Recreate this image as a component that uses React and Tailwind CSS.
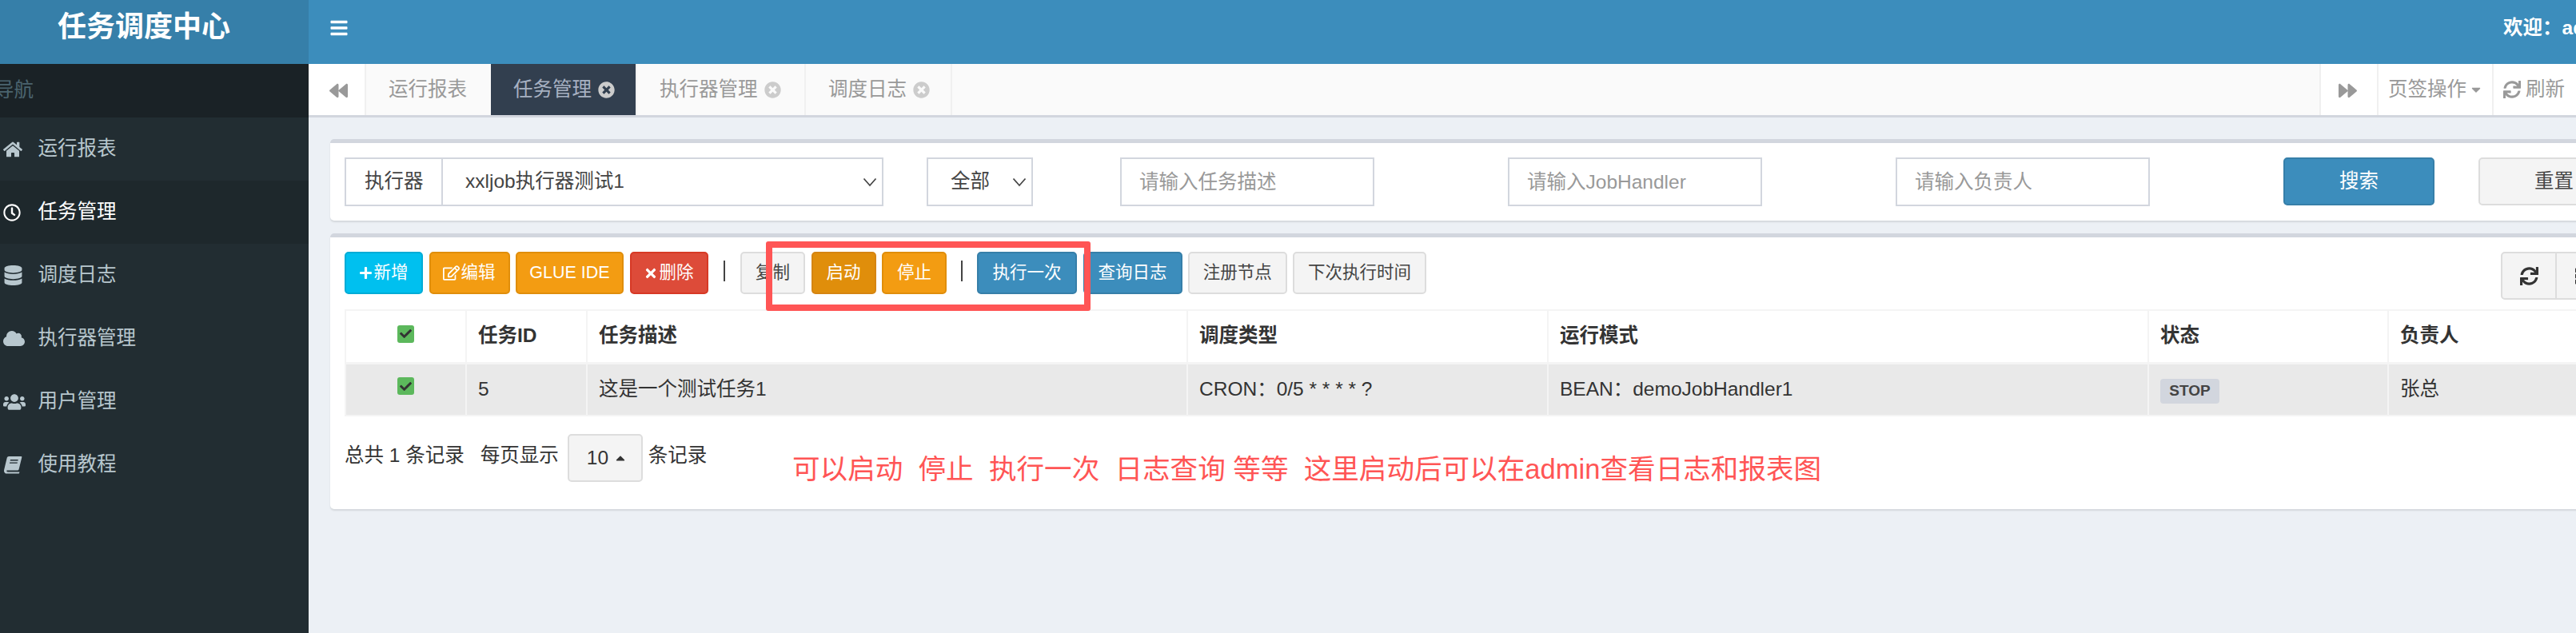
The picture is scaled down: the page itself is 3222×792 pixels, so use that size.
import React from "react";
import {
  FaBars, FaBackward, FaForward, FaHome, FaRegClock, FaDatabase, FaCloud, FaUsers,
  FaPlus, FaRegEdit, FaTimes, FaSync, FaTimesCircle, FaThList, FaCheck, FaCaretDown, FaCaretUp,
} from "react-icons/fa";

const font = "font-['Liberation_Sans','Noto_Sans_CJK_SC',sans-serif]";

// slanted book, the package's FaBook is upright
function BookIcon() {
  return (
    <svg width="24" height="23" viewBox="0 0 24 23" fill="currentColor">
      <path fillRule="evenodd" d="M7 1 H22.5 Q23.6 1 23.3 2.2 L19.6 17.2 Q19.2 18.5 18 18.5 H5 Q4 18.5 4.3 19.6 Q4.6 20.6 6 20.6 H20.5 L20 22 Q19.8 22.6 19 22.6 H4.5 Q1.4 22.6 1 19.5 Q0.9 18.6 1.2 17.4 L4.8 2.6 Q5.2 1 7 1 Z M9 5 L8.7 6.4 H18.4 L18.7 5 Z M8.2 8.4 L7.9 9.8 H17.6 L17.9 8.4 Z" />
    </svg>
  );
}

const navItems = [
  { label: "运行报表", icon: <FaHome className="text-[24px]" />, cls: "bg-[#222d32] text-[#b8c7ce]" },
  { label: "任务管理", icon: <FaRegClock className="text-[22px]" />, cls: "bg-[#1e282c] text-white" },
  { label: "调度日志", icon: <FaDatabase className="text-[25px]" />, cls: "text-[#b8c7ce]" },
  { label: "执行器管理", icon: <FaCloud className="text-[27px]" />, cls: "text-[#b8c7ce]" },
  { label: "用户管理", icon: <FaUsers className="text-[28px]" />, cls: "text-[#b8c7ce]" },
  { label: "使用教程", icon: <BookIcon />, cls: "text-[#b8c7ce]" },
];

function Chevron() {
  return (
    <svg width="18" height="12" viewBox="0 0 18 12" className="shrink-0">
      <path d="M1.5 1.5 L9 10 L16.5 1.5" fill="none" stroke="#444" strokeWidth="1.7" />
    </svg>
  );
}

function Tab({ label, cls }) {
  return (
    <div className={`flex items-center h-full pl-[28px] gap-[8px] border-r-2 border-[#f0f0f0] text-[#999] ${cls}`}>
      <span>{label}</span>
      <FaTimesCircle className="text-[21px] text-[#ccc]" />
    </div>
  );
}

function Btn({ cls, children }) {
  return (
    <button className={`h-[53px] shrink-0 flex items-center justify-center rounded-[5px] border-2 text-[21.5px] ${cls}`}>
      {children}
    </button>
  );
}

function Check() {
  return (
    <span className="mx-auto flex w-[21px] h-[22px] items-center justify-center rounded-[3px] bg-[#5cb85c]">
      <FaCheck className="text-[15px] text-[#333]" />
    </span>
  );
}

export default function App() {
  return (
    <div className={`flex w-[3222px] h-[792px] overflow-hidden bg-[#ecf0f5] text-[24.5px] text-[#333] ${font}`}>
      <aside className="w-[386px] shrink-0 bg-[#222d32] overflow-hidden">
        <div className="h-[80px] bg-[#367fa9] pl-[72px] pt-[14px] text-[36px] leading-[40px] font-bold text-white">任务调度中心</div>
        <div className="h-[67px] bg-[#1a2226] flex items-center -ml-[7px] text-[#4b646f]">导航</div>
        <nav>
          {navItems.map((item) => (
            <div key={item.label} className={`h-[79px] flex items-center pl-[4px] ${item.cls}`}>
              <span className="w-[43.5px] shrink-0">{item.icon}</span>
              <span>{item.label}</span>
            </div>
          ))}
        </nav>
      </aside>

      <main className="flex-1 min-w-0 overflow-hidden">
        <header className="h-[80px] bg-[#3c8dbc] flex items-center pl-[26px] text-white whitespace-nowrap">
          <FaBars className="text-[24px] -mt-[10px] shrink-0" />
          <span className="ml-[2695px] -mt-[10px] font-bold">欢迎：admin</span>
        </header>

        <div className="h-[67px] flex bg-[#fafafa] border-b-[3px] border-[#d2d6de] whitespace-nowrap">
          <div className="w-[72px] shrink-0 flex items-center pl-[26px] bg-white border-r-2 border-[#f0f0f0] text-[#999]"><FaBackward className="text-[23px] mt-[3px]" /></div>
          <div className="w-[156px] shrink-0 flex items-center pl-[28px] border-r-0 text-[#999]">运行报表</div>
          <Tab label="任务管理" cls="w-[183px] shrink-0 pl-[27px] bg-[#323f4f] !text-[#a7b1c2]" />
          <Tab label="执行器管理" cls="w-[211px] shrink-0" />
          <Tab label="调度日志" cls="w-[183px] shrink-0" />
          <div className="flex-1" />
          <div className="w-[72px] shrink-0 flex items-center pl-[22px] bg-white border-l-2 border-[#f0f0f0] text-[#999]"><FaForward className="text-[23px] mt-[3px]" /></div>
          <div className="w-[144px] shrink-0 flex items-center pl-[12px] bg-white border-l-2 border-[#f0f0f0] text-[#999]">页签操作<FaCaretDown className="text-[18px] ml-[3px]" /></div>
          <div className="w-[105px] shrink-0 flex items-center pl-[12px] gap-[6px] bg-white border-l-2 border-[#f0f0f0] text-[#999]"><FaSync className="text-[22px]" />刷新</div>
        </div>

        <div className="pl-[27px] pt-[27px] w-[2920px]">
          <section className="h-[102px] bg-white border-t-[5px] border-[#d2d6de] rounded-[5px] shadow-[0_2px_2px_rgba(0,0,0,0.1)] pl-[18px] pt-[18px] flex items-start whitespace-nowrap">
            <div className="w-[121px] h-[61px] shrink-0 flex items-center pl-[23px] border-2 border-r-0 border-[#d2d6de] text-[#444]">执行器</div>
            <div className="w-[553px] h-[61px] shrink-0 flex items-center justify-between pl-[28px] pr-[6px] border-2 border-[#d2d6de] text-[#444]">xxljob执行器测试1<Chevron /></div>
            <div className="ml-[54px] w-[133px] h-[61px] shrink-0 flex items-center justify-between pl-[28px] pr-[6px] border-2 border-[#d2d6de] text-[#444]">全部<Chevron /></div>
            <input className="ml-[109px] w-[318px] h-[61px] shrink-0 pl-[22px] border-2 border-[#d2d6de] placeholder:text-[#999]" placeholder="请输入任务描述" />
            <input className="ml-[167px] w-[318px] h-[61px] shrink-0 pl-[22px] border-2 border-[#d2d6de] placeholder:text-[#999]" placeholder="请输入JobHandler" />
            <input className="ml-[167px] w-[318px] h-[61px] shrink-0 pl-[22px] border-2 border-[#d2d6de] placeholder:text-[#999]" placeholder="请输入负责人" />
            <button className="ml-[167px] w-[189px] h-[60px] shrink-0 rounded-[5px] border-2 border-[#367fa9] bg-[#3c8dbc] text-white">搜索</button>
            <button className="ml-[55px] w-[189px] h-[60px] shrink-0 rounded-[5px] border-2 border-[#ddd] bg-[#f4f4f4] text-[#444]">重置</button>
          </section>

          <section className="relative mt-[16px] h-[345px] bg-white border-t-[5px] border-[#d2d6de] rounded-[5px] shadow-[0_2px_2px_rgba(0,0,0,0.1)] pl-[18px] pt-[18px] whitespace-nowrap">
            <div className="flex items-start gap-[7.5px]">
              <Btn cls="w-[98px] bg-[#00c0ef] border-[#00acd6] text-white"><FaPlus className="text-[17px] mr-[1px]" />新增</Btn>
              <Btn cls="w-[101px] bg-[#f39c12] border-[#e08e0b] text-white"><FaRegEdit className="text-[21px] mr-[1px]" />编辑</Btn>
              <Btn cls="w-[135px] bg-[#f39c12] border-[#e08e0b] text-white">GLUE IDE</Btn>
              <Btn cls="w-[98px] bg-[#dd4b39] border-[#d73925] text-white"><FaTimes className="text-[18px] mr-[1px]" />删除</Btn>
              <span className="ml-[12px] mr-[11.5px] mt-[11px] w-[2px] h-[26px] bg-[#444]" />
              <Btn cls="w-[81px] bg-[#f4f4f4] border-[#ddd] text-[#444]">复制</Btn>
              <Btn cls="w-[81px] bg-[#e08e0b] border-[#d58512] text-white">启动</Btn>
              <Btn cls="w-[81px] bg-[#f39c12] border-[#e08e0b] text-white">停止</Btn>
              <span className="ml-[10px] mr-[11px] mt-[11px] w-[2px] h-[26px] bg-[#444]" />
              <Btn cls="w-[125px] bg-[#3c8dbc] border-[#367fa9] text-white">执行一次</Btn>
              <Btn cls="w-[124px] bg-[#3c8dbc] border-[#367fa9] text-white">查询日志</Btn>
              <Btn cls="w-[123.5px] bg-[#f4f4f4] border-[#ddd] text-[#444]">注册节点</Btn>
              <Btn cls="w-[167px] bg-[#f4f4f4] border-[#ddd] text-[#444]">下次执行时间</Btn>
              <div className="ml-[1336.5px] flex h-[60px] shrink-0">
                <span className="w-[70px] flex items-center justify-center rounded-l-[5px] border-2 border-[#ddd] bg-[#f4f4f4] text-[#333]"><FaSync className="text-[23px]" /></span>
                <span className="w-[70px] flex items-center justify-center rounded-r-[5px] border-2 border-l-0 border-[#ddd] bg-[#f4f4f4] text-[#333]"><FaThList className="text-[23px]" /></span>
              </div>
            </div>

            <table className="mt-[12px] w-[2860px] table-fixed border-collapse">
              <colgroup>
                <col className="w-[151px]" />
                <col className="w-[151px]" />
                <col className="w-[751px]" />
                <col className="w-[451px]" />
                <col className="w-[751px]" />
                <col className="w-[300px]" />
                <col />
              </colgroup>
              <thead>
                <tr className="h-[66px] font-bold">
                  <th className="border-2 border-b-[3px] border-[#f4f4f4] pb-[6px]"><Check /></th>
                  {["任务ID", "任务描述", "调度类型", "运行模式", "状态", "负责人"].map((h) => (
                    <th key={h} className="border-2 border-b-[3px] border-[#f4f4f4] pl-[14px] text-left">{h}</th>
                  ))}
                </tr>
              </thead>
              <tbody>
                <tr className="h-[66px] bg-[#e9e9e9]">
                  <td className="border-2 border-[#f4f4f4] pb-[8px]"><Check /></td>
                  <td className="border-2 border-[#f4f4f4] pl-[14px]">5</td>
                  <td className="border-2 border-[#f4f4f4] pl-[14px]">这是一个测试任务1</td>
                  <td className="border-2 border-[#f4f4f4] pl-[14px]">CRON：0/5 * * * * ?</td>
                  <td className="border-2 border-[#f4f4f4] pl-[14px]">BEAN：demoJobHandler1</td>
                  <td className="border-2 border-[#f4f4f4] pl-[14px]">
                    <span className="inline-flex h-[31px] w-[74px] items-center justify-center rounded-[4px] bg-[#d2d6de] text-[19px] font-bold text-[#444]">STOP</span>
                  </td>
                  <td className="border-2 border-[#f4f4f4] pl-[14px]">张总</td>
                </tr>
              </tbody>
            </table>

            <div className="mt-[22px] flex items-center">
              <span className="-mt-[6px]">总共 1 条记录</span>
              <span className="ml-[20px] -mt-[6px]">每页显示</span>
              <span className="ml-[11px] w-[94px] h-[60px] flex items-center pl-[22px] rounded-[5px] border-2 border-[#ddd] bg-[#f4f4f4]">10<FaCaretUp className="text-[18px] ml-[6px]" /></span>
              <span className="ml-[7px] -mt-[6px]">条记录</span>
            </div>

            {/* annotation drawn over the screenshot */}
            <div className="absolute left-[545px] top-[5px] w-[406px] h-[87px] border-[8px] border-[#ff5555] rounded-[3px]" />
            <div className="absolute left-[578px] top-[270px] text-[34.6px] leading-[40px] text-[#ff5555] whitespace-pre">{"可以启动  停止  执行一次  日志查询 等等  这里启动后可以在admin查看日志和报表图"}</div>
          </section>
        </div>
      </main>
    </div>
  );
}
